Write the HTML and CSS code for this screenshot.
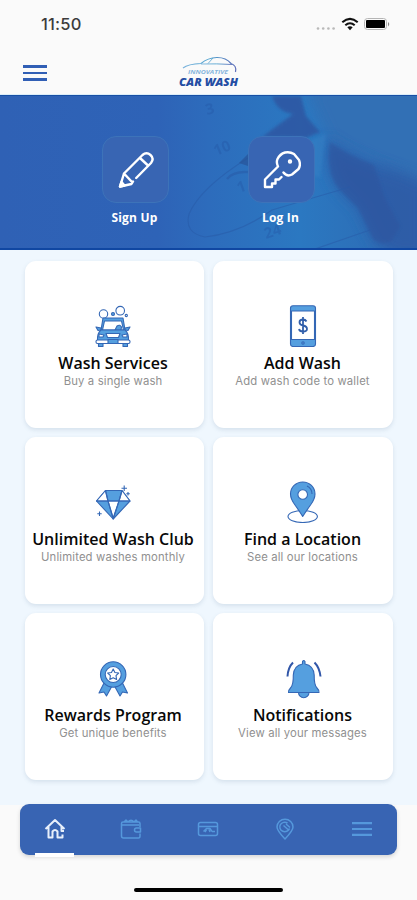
FILE: index.html
```html
<!DOCTYPE html>
<html lang="en">
<head>
    <meta charset="utf-8">
    <meta name="viewport" content="width=device-width, initial-scale=1.0">
    <title>Innovative Car Wash</title>
    <link rel="stylesheet" href="styles.css">
</head>
<body>
<div class="statusbar">
    <span class="time">11:50</span>
    <svg class="status-icons" width="78" height="18" viewBox="0 0 78 18">
        <g fill="#b9b9b9"><circle cx="4" cy="13.500" r="1.300"/><circle cx="9.200" cy="13.500" r="1.300"/><circle cx="14.400" cy="13.500" r="1.300"/><circle cx="19.600" cy="13.500" r="1.300"/></g>
        <g fill="none" stroke="#111" stroke-width="2.1"><path d="M28.300 7.200Q36 0.400 43.700 7.200"/><path d="M31.300 10.300Q36 6.200 40.700 10.300"/></g>
        <path d="M33.300 12.200Q36 10.200 38.700 12.200L36 15.200Z" fill="#111"/>
        <rect x="50.500" y="3.500" width="22" height="11" rx="3" fill="none" stroke="#b5b5b5"/>
        <rect x="52" y="5" width="19" height="8" rx="1" fill="#000"/>
        <path d="M74 7V11.500Q76.500 9.200 74 7Z" fill="#888"/>
    </svg>
</div>
<header class="header">
    <div class="menu"><span></span><span></span><span></span></div>
    <svg class="logo" width="64" height="36" viewBox="0 0 64 36">
        <defs>
            <linearGradient id="lg" x1="0" x2="1"><stop offset="0" stop-color="#7db4dd"/><stop offset=".5" stop-color="#53a4cf"/><stop offset="1" stop-color="#5f6fba"/></linearGradient>
        </defs>
        <g fill="none" stroke="url(#lg)">
            <path d="M6 13Q11 9 24 8.500C33 1 47 0 54 8.500Q60 10.500 58.500 17" stroke-width="1.200"/>
            <path d="M24 9Q40 8.500 55 9.500M31 8.500L36 3" stroke-width=".9"/>
        </g>
        <text class="logo-top" x="11" y="18.500" textLength="40" lengthAdjust="spacingAndGlyphs">INNOVATIVE</text>
        <text class="logo-main" x="2" y="31" textLength="59" lengthAdjust="spacingAndGlyphs">CAR WASH</text>
    </svg>
</header>

<section class="hero">
    <svg class="hero-bg" width="417" height="155" viewBox="0 0 417 155">
        <defs>
            <linearGradient id="hg" x1="0" x2="1">
                <stop offset="0" stop-color="#2f61b5"/><stop offset=".38" stop-color="#2e63b7"/>
                <stop offset=".5" stop-color="#2d6cbc"/><stop offset=".72" stop-color="#2b78c1"/><stop offset="1" stop-color="#2e69b1"/>
            </linearGradient>
            <filter id="soft"><feGaussianBlur stdDeviation="1.5"/></filter>
            <filter id="softer"><feGaussianBlur stdDeviation="7"/></filter>
        </defs>
        <rect width="417" height="155" fill="url(#hg)"/>
        <path d="M305 -10H430V92L385 70L330 45Z" fill="#3070b5" filter="url(#softer)"/>
        <path d="M272 0H301L306 20L320 36L306 42L262 41L293 18Q277 16 272 0Z" fill="#2d57a2" filter="url(#soft)" opacity=".85"/>
        <path d="M328 42Q346 58 374 69Q402 75 425 88V160H395Q381 154 373 143L358 112L342 96Q325 80 328 42Z" fill="#2d5aa5" filter="url(#softer)" opacity=".8"/>
        <path d="M330 46Q346 58 374 69L384 100L400 130L392 145Q381 150 373 143L358 112L342 96Q325 80 330 46Z" fill="#2d559f" filter="url(#soft)" opacity=".6"/>
        <path d="M326 37L306 48L312 78L320 82Z" fill="#347fc4" opacity=".6" filter="url(#soft)"/>
        <g fill="none" stroke="#285ba8" stroke-width="1.200" opacity=".55">
            <path d="M248 62Q200 92 189 118Q184 137 205 141Q240 137 272 114L350 91"/>
            <path d="M315 153L370 134"/><path d="M227 83Q233 75 248 76" stroke-width="2.500"/>
        </g>
        <path d="M239 67L248 58V70Z" fill="#285499" opacity=".7"/>
        <g class="dates">
            <text x="207" y="19" transform="rotate(-15 207 19)">3</text>
            <text x="216" y="60" transform="rotate(-22 216 60)">10</text>
            <text x="239" y="97" transform="rotate(-20 239 97)">1</text>
            <text x="266" y="143" transform="rotate(-18 266 143)">24</text>
        </g>
    </svg>
    <a class="action">
        <span class="action-box">
            <svg width="38" height="38" viewBox="0 0 38 38">
                <path d="M19.200 27.500L34 12.500Q37.500 8 33.500 4.500Q29.500 1 25.500 4.500L7 23L3 36L14.500 33.500L16 31M7 23L14.500 31M23 7.500L31 15" transform="translate(0 -.5)"/>
                <path d="M3 35.500L4.500 31L7.500 34.500Z"/>
            </svg>
        </span>
        <span class="action-label">Sign Up</span>
    </a>
    <a class="action">
        <span class="action-box">
            <svg width="38" height="38" viewBox="0 0 38 38">
                <path d="M20.500 21.500Q24 26 29 23.500L35.500 18Q38 14 36 9L31 3Q27 .5 22 1.500Q17 3 14.500 8Q13 11.500 15 15.500L2 28.500V36H9V32.500H12.500V28.500H16L18.500 26"/>
                <circle cx="27" cy="10.500" r="1"/>
            </svg>
        </span>
        <span class="action-label">Log In</span>
    </a>
</section>

<main class="cards">
    <div class="card">
        <svg class="icon" viewBox="0 0 42 42">
            <g class="line"><circle cx="11.500" cy="9" r="4.200"/><circle cx="28.200" cy="5.700" r="4.300"/><circle cx="21" cy="9" r="1.500" class="fill"/><circle cx="34.300" cy="10.500" r="1.100"/>
            <path class="fill" d="M11 13H31L33 25H9Z"/><path class="white" d="M12.500 16H29.500L31.500 25H10.500Z"/>
            <path class="fill" d="M4 22L9 23V25L6 25.500ZM38 22L33 23V25L36 25.500ZM23 25L25 21Q28 19 29.500 22L29 25Z"/>
            <path class="fill" d="M9 25H33Q37 28 36.500 36H5.500Q5 28 9 25Z"/>
            <path class="white" d="M7 29L12 30L11 32H7ZM35 29L30 30L31 32H35ZM14 28.500H28L26.500 32.500H15.500Z"/>
            <path class="fill" d="M6.500 38V41.500H11V38M31 38V41.500H35.500V38"/>
            <rect class="white" x="4" y="35" width="34" height="3.500" rx="1.500"/><rect class="fill" x="16" y="34.500" width="10" height="4"/></g>
        </svg>
        <h2>Wash Services</h2>
        <p>Buy a single wash</p>
    </div>
    <div class="card">
        <svg class="icon" viewBox="0 0 42 42">
            <g class="line"><rect class="fill" x="8.500" y=".8" width="25" height="40.700" rx="2.500"/><rect class="white" x="9.500" y="6" width="23" height="28.500"/><circle cx="21" cy="38" r="1.200"/></g>
            <path class="dollar" d="M24.500 16.500Q23.500 14.500 21 14.500Q17.500 14.500 17.500 17.300Q17.500 20 21 20.500Q25 21.200 25 24Q25 26.500 21 26.500Q17.500 26.500 17 24M21 12V29"/>
        </svg>
        <h2>Add Wash</h2>
        <p>Add wash code to wallet</p>
    </div>
    <div class="card">
        <svg class="icon" viewBox="0 0 42 42">
            <g class="line"><path class="fill" d="M13.500 9.500H30L38 20L21.200 38L4.500 20Z"/><path class="white" d="M13.500 9.500L16 20H4.500ZM30 9.500L27 20H38ZM16 20H27L21.200 38Z"/><path d="M4.500 20H38M13.500 9.500L16 20L21.200 37L27 20L30 9.500"/>
            <path d="M32.200 4.500V10M29.500 7.300H35M36 11V14.500M34.300 12.700H37.800M7.500 30.500V35M5.300 32.700H9.700"/></g>
        </svg>
        <h2>Unlimited Wash Club</h2>
        <p>Unlimited washes monthly</p>
    </div>
    <div class="card">
        <svg class="icon" viewBox="0 0 42 42">
            <g class="line"><ellipse class="white" cx="20.700" cy="35.500" rx="14.700" ry="6"/><path class="fill" d="M20.700 35.500Q18 31 13 24Q8.500 18 8.500 13A12.200 12 0 0 1 33 13Q33 18 28.500 24Q23.500 31 20.700 35.500Z"/><circle class="white" cx="20.700" cy="13.500" r="4.800"/><path d="M25 5Q30 7.500 30 13"/></g>
        </svg>
        <h2>Find a Location</h2>
        <p>See all our locations</p>
    </div>
    <div class="card">
        <svg class="icon" viewBox="0 0 42 42">
            <g class="line"><path class="fill" d="M12 26L7 36L12 35L14.500 39L20 29ZM30.500 26L35.500 36L30.500 35L28 39L22.500 29Z"/><circle class="fill" cx="21.200" cy="17.500" r="12.700"/><circle class="white" cx="21.200" cy="17.500" r="8"/><path class="white" d="M21.200 12L22.900 15.500L26.700 16L24 18.700L24.600 22.500L21.200 20.700L17.800 22.500L18.400 18.700L15.700 16L19.500 15.500Z"/></g>
        </svg>
        <h2>Rewards Program</h2>
        <p>Get unique benefits</p>
    </div>
    <div class="card">
        <svg class="icon" viewBox="0 0 42 42">
            <g class="line"><path class="fill" d="M16.500 35.500A5 5 0 0 0 27 35.500Z"/><path class="fill" d="M20.500 7V4.500Q21.700 2.500 23 4.500V7Q31.500 8.500 32.200 18Q32 28 35 31Q37.500 33.500 37 35.500H6.500Q6 33.500 8.500 31Q11.500 28 11.300 18Q12 8.500 20.500 7Z"/></g>
            <path class="ring" d="M5.500 19.500Q6 10.500 11 5.500M32.500 5.500Q37.500 10.500 38.500 19.500"/>
        </svg>
        <h2>Notifications</h2>
        <p>View all your messages</p>
    </div>
</main>

<footer class="footer">
    <nav class="tabs">
        <a class="tab active"><svg viewBox="0 0 22 22"><path d="M1.500 11L11 2L20.500 11M4.500 9V19.500H8.500V13.500Q11 10.500 13.500 13.500V19.500H18.500V16.500M17.500 8.500V13H20"/></svg></a>
        <a class="tab"><svg viewBox="0 0 22 22"><path d="M20 9V5.500Q20 4 18.500 4H3Q1.500 4 1.500 5.500V18Q1.500 20 3.500 20H18.500Q20 20 20 18V15.500M1.500 7H19M4 4L6 2L8 4M8 4Q11 .5 14 4M14 4L16 2L17.500 4M20.500 10H16.500Q14.500 10 14.500 12T16.500 14H20.500Z"/></svg></a>
        <a class="tab"><svg viewBox="0 0 22 22"><rect x="1.500" y="4.500" width="19" height="13" rx="2"/><path d="M2 8.500H20M6.500 13.500L9.500 10.500H13L15 13.500M9.500 11.500L8 14M12 11.500L13 14M15 13.500H18"/></svg></a>
        <a class="tab"><svg viewBox="0 0 22 22"><path d="M11 21Q3 12.500 3 9A8 7.700 0 0 1 19 9Q19 12.500 11 21Z"/><path d="M13.500 5A5 4.700 0 1 0 15.500 10.500M9.500 7.500L14 11.500M12 6L16 9.500"/></svg></a>
        <a class="tab"><svg class="bars" viewBox="0 0 22 22"><path d="M1 5.200H21M1 11H21M1 16.800H21"/></svg></a>
    </nav>
    <div class="homebar"></div>
</footer>
</body>
</html>
```
FILE: styles.css
```css
* {
    box-sizing: border-box;
}
body {
    margin: 0;
    width: 417px;
    height: 900px;
    overflow: hidden;
    display: flex;
    flex-direction: column;
    background: #fafafa;
    font-family: "Open Sans", "Noto Sans", sans-serif;
}
.statusbar {
    height: 48px;
    padding: 0 25px 0 41px;
    display: flex;
    align-items: center;
    justify-content: space-between;
}
.time {
    font: 500 16.5px "Inter", sans-serif;
    letter-spacing: .2px;
    color: #3c3c3c;
}
.header {
    height: 47px;
    display: grid;
    grid-template-columns: 1fr auto 1fr;
    align-items: start;
    padding: 7px 23px 0;
    border-bottom: 1px solid #dcedf8;
}
.menu {
    width: 24px;
    padding-top: 10px;
    display: grid;
    gap: 4px;
}
.menu span {
    height: 2.7px;
    background: #315fb5;
}
.logo-top {
    font: italic 700 5.5px "Open Sans", sans-serif;
    fill: #86b5dc;
}
.logo-main {
    font: italic 800 11px "Open Sans", sans-serif;
    fill: #244da3;
}

.hero {
    position: relative;
    height: 155px;
    padding: 40px 102px 0 102px;
    display: flex;
    justify-content: space-between;
    border-top: 1px solid #174fa5;
    border-bottom: 2px solid #1047a2;
    overflow: hidden;
}
.hero-bg {
    position: absolute;
    left: 0;
    top: 0;
}
.dates {
    font: 700 15px "Open Sans", sans-serif;
    fill: #255aa9;
    opacity: .45;
}
.action {
    position: relative;
    width: 67px;
    display: flex;
    flex-direction: column;
    align-items: center;
}
.action-box {
    width: 67px;
    height: 67px;
    border: 1px solid #3d73b9;
    border-radius: 14px;
    background: #3865b3;
    display: flex;
    align-items: center;
    justify-content: center;
}
.action-box svg {
    fill: none;
    stroke: #fff;
    stroke-width: 2.4;
    stroke-linecap: round;
    stroke-linejoin: round;
}
.action-label {
    margin-top: 6px;
    padding-right: 2px;
    font-size: 12px;
    line-height: 18px;
    font-weight: 700;
    letter-spacing: .2px;
    color: #fff;
    white-space: nowrap;
}

.cards {
    height: 555px;
    padding: 11px 24px 0 25px;
    display: grid;
    grid-template-columns: 179px 180px;
    grid-auto-rows: 167px;
    gap: 9px;
    background: #eff7fe;
}
.card {
    padding-top: 44px;
    display: flex;
    flex-direction: column;
    align-items: center;
    background: #fff;
    border-radius: 11px;
    box-shadow: 0 2px 4px rgba(80, 110, 140, .16);
}
.card:nth-child(odd) {
    padding-right: 3px;
}
.card:nth-child(even) {
    padding-right: 1px;
}
.icon {
    width: 42px;
    height: 42px;
    flex: none;
}
.line {
    fill: none;
    stroke: #3467b5;
    stroke-width: 1.1;
    stroke-linejoin: round;
}
.fill {
    fill: #559fdf;
}
.white {
    fill: #fff;
}
.dollar {
    fill: none;
    stroke: #315fab;
    stroke-width: 1.8;
}
.ring {
    fill: none;
    stroke: #3156a8;
    stroke-width: 2;
}
.card h2 {
    margin: 5px 0 0;
    font-size: 16px;
    line-height: 22px;
    font-weight: 600;
    letter-spacing: 0;
    color: #080808;
    white-space: nowrap;
}
.card p {
    margin: -1px 0 0;
    font: 400 11.3px/16px "Inter", sans-serif;
    letter-spacing: .15px;
    color: #909090;
    white-space: nowrap;
}

.footer {
    flex: 1;
    display: flex;
    flex-direction: column;
    align-items: center;
}
.tabs {
    width: 377px;
    height: 51px;
    margin-top: -1px;
    padding: 0 16px 0 15px;
    display: flex;
    justify-content: space-between;
    background: #3864b3;
    border-radius: 9px;
    box-shadow: 0 2px 4px rgba(0, 0, 0, .15);
}
.tab {
    width: 39px;
    height: 53px;
    display: flex;
    justify-content: center;
    padding-top: 14px;
}
.tab svg {
    width: 22px;
    height: 22px;
    fill: none;
    stroke: #5598dc;
    stroke-width: 1.5;
    stroke-linejoin: round;
}
.tab .bars {
    stroke-width: 2.2;
}
.tab.active {
    border-bottom: 4px solid #fff;
}
.tab.active svg {
    stroke: #e7effb;
    stroke-width: 2;
}
.homebar {
    width: 149px;
    height: 4px;
    margin-top: 33px;
    border-radius: 2px;
    background: #000;
}
```
